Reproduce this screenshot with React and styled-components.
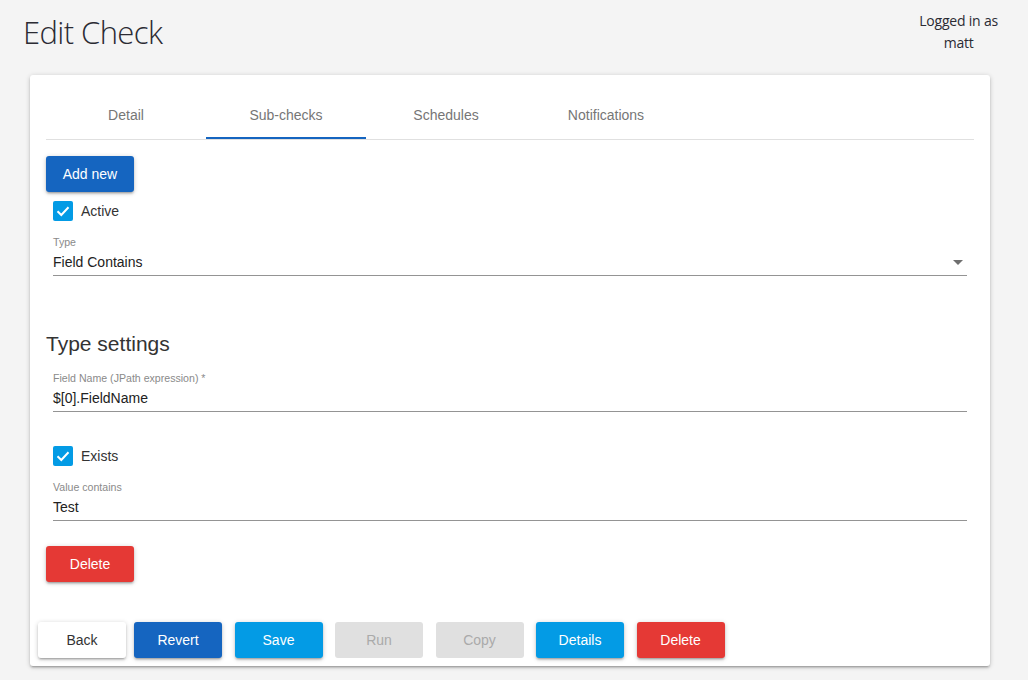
import React from 'react'
import styled, { createGlobalStyle, css } from 'styled-components'

const GlobalStyle = createGlobalStyle`
  html, body {
    margin: 0;
    padding: 0;
    background: #f4f4f4;
  }
  body {
    font-family: 'Liberation Sans', Arial, sans-serif;
  }
`

const Page = styled.div`
  width: 1028px;
  min-height: 680px;
  background: #f4f4f4;
`

const Header = styled.header`
  display: flex;
  justify-content: space-between;
  align-items: flex-start;
  padding: 10px 30px 0 23px;
  height: 75px;
  box-sizing: border-box;
`

const Title = styled.h1`
  margin: 0;
  font-family: 'Open Sans', sans-serif;
  font-weight: 300;
  font-size: 31px;
  line-height: 44px;
  color: #2b2b33;
  letter-spacing: -0.6px;
`

const UserInfo = styled.div`
  font-family: 'Open Sans', sans-serif;
  font-size: 14px;
  line-height: 22px;
  color: #2b2b33;
  text-align: center;
  letter-spacing: -0.2px;
`

const Card = styled.section`
  margin: 0 0 0 30px;
  width: 960px;
  background: #fff;
  border-radius: 3px;
  box-shadow: 0 1px 5px 0 rgba(0, 0, 0, 0.2), 0 2px 2px 0 rgba(0, 0, 0, 0.14),
    0 3px 1px -2px rgba(0, 0, 0, 0.12);
`

const CardBody = styled.div`
  padding: 16px 16px 32px;
`

const Tabs = styled.nav`
  display: flex;
  height: 48px;
  border-bottom: 1px solid #e0e0e0;
`

const Tab = styled.div`
  position: relative;
  width: 160px;
  display: flex;
  align-items: center;
  justify-content: center;
  font-size: 14px;
  color: #767676;
  ${({ active }) =>
    active &&
    css`
      &::after {
        content: '';
        position: absolute;
        left: 0;
        right: 0;
        bottom: 0;
        height: 2px;
        background: #1565c0;
      }
    `}
`

const variants = {
  default: css`
    background: #fff;
    color: #333;
  `,
  primary: css`
    background: #1565c0;
    color: #fff;
  `,
  secondary: css`
    background: #039be5;
    color: #fff;
  `,
  danger: css`
    background: #e53935;
    color: #fff;
  `,
  disabled: css`
    background: #e0e0e0;
    color: #aaa;
    box-shadow: none;
  `,
}

const Button = styled.button`
  width: 88px;
  height: 36px;
  border: none;
  border-radius: 3px;
  font-family: 'Liberation Sans', Arial, sans-serif;
  font-size: 14px;
  padding: 0;
  cursor: pointer;
  box-shadow: 0 1px 5px 0 rgba(0, 0, 0, 0.2), 0 2px 2px 0 rgba(0, 0, 0, 0.14),
    0 3px 1px -2px rgba(0, 0, 0, 0.12);
  margin-top: ${({ mt }) => mt || 0}px;
  ${({ variant }) => variants[variant || 'default']}
`

const CheckRow = styled.label`
  display: flex;
  align-items: center;
  gap: 8px;
  height: 20px;
  margin: ${({ mt }) => mt}px 0 0 7px;
  font-size: 14px;
  color: #333;
`

const Field = styled.div`
  position: relative;
  margin: ${({ mt }) => mt}px 7px 0;
`

const FieldLabel = styled.div`
  font-size: 10.6px;
  line-height: 14px;
  height: 14px;
  color: #8a8a8a;
`

const FieldValue = styled.div`
  margin-top: 2px;
  height: 22px;
  line-height: 22px;
  padding-bottom: 2px;
  font-size: 14px;
  color: #222;
  border-bottom: 1px solid #949494;
`

const Arrow = styled.svg`
  position: absolute;
  right: 4px;
  bottom: 11px;
`

const SectionHeading = styled.h2`
  margin: 56px 0 0;
  font-size: 21px;
  font-weight: 400;
  line-height: 24px;
  color: #333;
`

const Actions = styled.div`
  display: flex;
  padding: 8px;
  gap: 12.5px;
`

const BackGroup = styled.div`
  display: flex;
  gap: 8px;
`

function Checkbox({ label, mt }) {
  return (
    <CheckRow mt={mt}>
      <svg width="20" height="20" viewBox="0 0 20 20">
        <rect width="20" height="20" rx="2" fill="#039be5" />
        <path d="M4.5 10.2 L8.3 14 L15.5 6.3" fill="none" stroke="#fff" strokeWidth="2" />
      </svg>
      {label}
    </CheckRow>
  )
}

function TextField({ label, value, mt, select }) {
  return (
    <Field mt={mt}>
      <FieldLabel>{label}</FieldLabel>
      <FieldValue>{value}</FieldValue>
      {select && (
        <Arrow width="10" height="5" viewBox="0 0 10 5">
          <polygon points="0,0 10,0 5,5" fill="#6f6f6f" />
        </Arrow>
      )}
    </Field>
  )
}

export default function App() {
  const tabs = ['Detail', 'Sub-checks', 'Schedules', 'Notifications']
  return (
    <Page>
      <GlobalStyle />
      <Header>
        <Title>Edit Check</Title>
        <UserInfo>
          Logged in as
          <br />
          matt
        </UserInfo>
      </Header>
      <Card>
        <CardBody>
          <Tabs>
            {tabs.map(t => (
              <Tab key={t} active={t === 'Sub-checks'}>
                {t}
              </Tab>
            ))}
          </Tabs>
          <Button variant="primary" mt={16}>
            Add new
          </Button>
          <Checkbox label="Active" mt={9} />
          <TextField label="Type" value="Field Contains" mt={14} select />
          <SectionHeading>Type settings</SectionHeading>
          <TextField label="Field Name (JPath expression) *" value="$[0].FieldName" mt={15} />
          <Checkbox label="Exists" mt={34} />
          <TextField label="Value contains" value="Test" mt={14} />
          <Button variant="danger" mt={25}>
            Delete
          </Button>
        </CardBody>
        <Actions>
          <BackGroup>
            <Button>Back</Button>
            <Button variant="primary">Revert</Button>
          </BackGroup>
          <Button variant="secondary">Save</Button>
          <Button variant="disabled">Run</Button>
          <Button variant="disabled">Copy</Button>
          <Button variant="secondary">Details</Button>
          <Button variant="danger">Delete</Button>
        </Actions>
      </Card>
    </Page>
  )
}
